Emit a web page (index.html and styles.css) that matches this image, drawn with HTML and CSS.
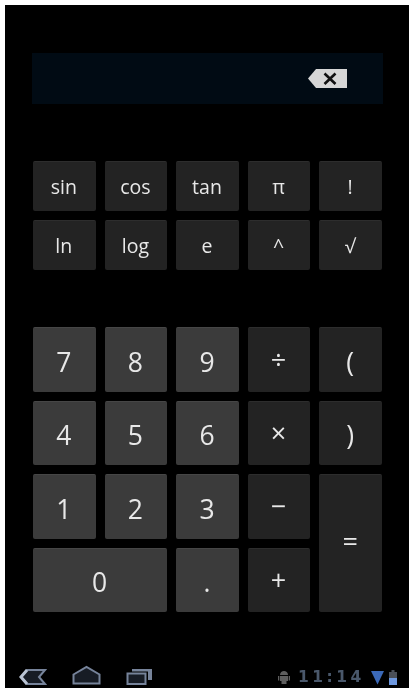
FILE: index.html
```html
<!DOCTYPE html>
<html lang="en">
<head>
<meta charset="utf-8">
<title>Calculator</title>
<link rel="stylesheet" href="styles.css">
</head>
<body>
<main class="screen">
  <div class="display">
    <svg class="backspace" width="39" height="19" viewBox="0 0 39 19"><path class="bs-body" d="M0 9.500L8 0H39V19H8Z"/><path class="bs-x" d="M16.500 4.500L27.500 15M27.500 4.500L16.500 15"/></svg>
  </div>
  <div class="keys sci">
    <button class="key">sin</button><button class="key">cos</button><button class="key">tan</button><button class="key">π</button><button class="key">!</button>
    <button class="key">ln</button><button class="key">log</button><button class="key">e</button><button class="key">^</button><button class="key">√</button>
  </div>
  <div class="keys num">
    <button class="key light">7</button><button class="key light">8</button><button class="key light">9</button><button class="key op">÷</button><button class="key">(</button>
    <button class="key light">4</button><button class="key light">5</button><button class="key light">6</button><button class="key op">×</button><button class="key">)</button>
    <button class="key light">1</button><button class="key light">2</button><button class="key light">3</button><button class="key op">−</button><button class="key op equals">=</button>
    <button class="key light zero">0</button><button class="key light dot">.</button><button class="key op">+</button>
  </div>
  <nav class="bar">
    <div class="nav-icons">
      <svg width="28" height="20" viewBox="0 0 28 20"><path class="nav-i" d="M8 5H26L20 12L26 19H8L2 12Z"/><path class="nav-hi" d="M8 5L2 12L8 19"/></svg>
      <svg width="29" height="20" viewBox="0 0 29 20"><path class="nav-i" d="M1.500 9.500L14.500 2L27.500 9.500V18.500H1.500Z"/></svg>
      <svg width="28" height="20" viewBox="0 0 28 20"><path class="nav-i" d="M1.500 8.500H19.500V19H1.500Z"/><path class="nav-b" d="M6 4H26V15H22V6.500H6Z"/></svg>
    </div>
    <div class="status">
      <svg class="android-i" width="14" height="14" viewBox="0 0 14 14"><path class="android" d="M3 6H11V11H9.500V14H4.500V11H3ZM3 5C3 2.500 5 1 7 1S11 2.500 11 5ZM1 6H2.300V10.500H1ZM11.700 6H13V10.500H11.700Z"/></svg>
      <span class="clock">11:14</span>
      <svg width="13" height="15" viewBox="0 0 13 15"><path class="wifi" d="M0 1H13L6.500 14.500Z"/></svg>
      <svg width="8" height="15" viewBox="0 0 8 15"><path class="batt-top" d="M2.500 0H5.500V2H8V8H0V2H2.500Z"/><path class="batt" d="M0 8H8V15H0Z"/></svg>
    </div>
  </nav>
</main>
</body>
</html>
```
FILE: styles.css
```css
html, body { margin: 0; background: #fff; }
body { width: 412px; height: 690px; overflow: hidden; padding: 5px 0 0 5px; box-sizing: border-box; }
.screen {
  width: 404px; height: 683px; background: #000; position: relative;
  display: flex; flex-direction: column; padding: 48px 27px 0 28px; box-sizing: border-box;
  filter: blur(0.35px);
}
.display {
  height: 51px; margin: 0 -1px; background: #010b14; flex: none;
  display: flex; align-items: center; justify-content: flex-end; padding-right: 36px;
}
.bs-body { fill: #d6d6d6; }
.bs-x { stroke: #111; stroke-width: 2.600; fill: none; }
.keys { display: grid; grid-template-columns: repeat(5, 1fr); column-gap: 9px; flex: none; }
.sci { margin-top: 57px; grid-auto-rows: 50px; row-gap: 9px; }
.num { margin-top: 57px; grid-auto-rows: 64.500px; row-gap: 9px; }
.key {
  border: 0; border-top: 1px solid #2d2d2d; border-radius: 2px; padding: 0 1px 0 0; margin: 0;
  background: #232323; color: #e8e8e8; min-width: 0;
  font-family: "Open Sans", "Noto Sans", sans-serif; font-weight: 400;
}
.sci .key { font-size: 19.500px; padding-bottom: 0; }
.num .key { font-size: 26.500px; padding-top: 4px; }
.num .op { font-size: 27px; padding-top: 0; padding-bottom: 2px; }
.light { background: #3b3b3b; border-top-color: #464646; }
.zero { grid-column: span 2; }
.num .equals { grid-column: 5; grid-row: 3 / span 2; padding-bottom: 6px; }
.bar {
  position: absolute; left: 0; right: 0; bottom: 0; height: 23px;
  display: flex; justify-content: space-between; align-items: flex-start; padding: 0 12px 0 14px;
}
.nav-icons { display: flex; gap: 25px; }
.nav-i { fill: #171c25; stroke: #76839a; stroke-width: 2; }
.nav-b { fill: #76839a; }
.nav-hi { fill: none; stroke: #b9c3d3; stroke-width: 3; }
.status { display: flex; align-items: center; gap: 5px; padding-top: 3px; }
.android-i { margin-right: 2px; }
.android { fill: #5e5e5e; }
.clock { font: 700 15.500px "DejaVu Sans", sans-serif; color: #4a586b; letter-spacing: 3.500px; width: 68px; }
.wifi { fill: #3b69b8; }
.batt-top { fill: #4a4f58; }
.batt { fill: #6d97de; }
```
